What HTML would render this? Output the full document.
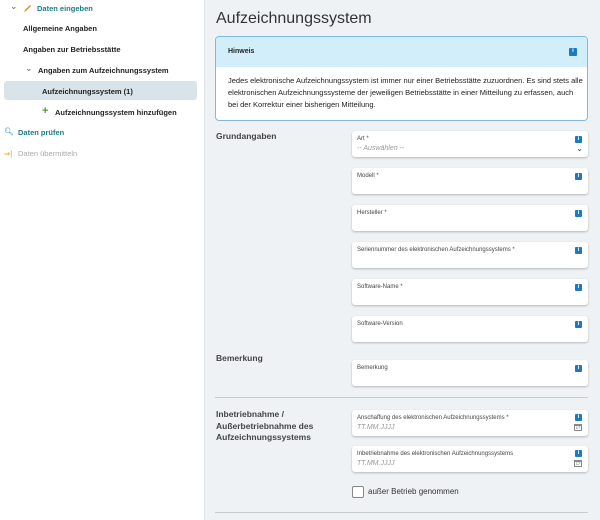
<!DOCTYPE html>
<html><head><meta charset="utf-8"><style>
*{box-sizing:border-box;margin:0;padding:0}
body{width:600px;height:520px;overflow:hidden;font-family:"Liberation Sans","DejaVu Sans",sans-serif;background:#eff2f5;position:relative;color:#222}
.side{position:absolute;left:0;top:0;width:205px;height:520px;background:#fff}
.a{position:absolute;font-size:7.5px;white-space:nowrap}
.b{font-weight:bold}
.sec{font-size:8.5px;color:#444;font-weight:bold}
.inp{position:absolute;left:352px;width:236px;height:26px;background:#fff;border-radius:3px;box-shadow:0 1px 2px rgba(0,0,0,.25)}
.inp .l{position:absolute;left:5px;top:5px;font-size:6px;color:#444;white-space:nowrap}
.inp .p{position:absolute;left:5px;top:14px;font-size:7px;color:#999;font-style:italic}
.ic{position:absolute;right:6px;top:5px;width:7px;height:7px;background:#1a7bc4;border-radius:1px;color:#fff;font-size:6px;font-weight:bold;text-align:center;line-height:7px}
.cal{position:absolute;right:6px;top:14px;width:8px;height:7px;border:1px solid #888;border-top:2px solid #888;font-size:4px;line-height:4px;text-align:center;color:#555}
.hr{position:absolute;left:215px;width:373px;height:1px;background:#c8ccd0}
</style></head><body>
<div class="side">
  <div class="a" style="left:10px;top:1px;color:#666;font-size:9px">⌄</div>
  <svg style="position:absolute;left:23px;top:4px" width="9" height="9" viewBox="0 0 9 9"><path d="M1 8 L2 6 L7 1 L8 2 L3 7 Z" fill="#e08a1e"/></svg>
  <div class="a b" style="left:37px;top:4px;color:#1a7c86">Daten eingeben</div>
  <div class="a b" style="left:23px;top:24px">Allgemeine Angaben</div>
  <div class="a b" style="left:23px;top:45px">Angaben zur Betriebsstätte</div>
  <div class="a" style="left:25px;top:63px;color:#666;font-size:9px">⌄</div>
  <div class="a b" style="left:38px;top:66px">Angaben zum Aufzeichnungssystem</div>
  <div style="position:absolute;left:4px;top:81px;width:193px;height:19px;background:#d9e3ea;border-radius:3px"></div>
  <div class="a b" style="left:42px;top:87px">Aufzeichnungssystem (1)</div>
  <div class="a b" style="left:42px;top:105px;color:#4aa02c;font-size:11px">+</div>
  <div class="a b" style="left:55px;top:108px">Aufzeichnungssystem hinzufügen</div>
  <div class="a" style="left:4px;top:127px;color:#1a7bc4">🔍︎</div>
  <div class="a b" style="left:18px;top:128px;color:#1a7c86">Daten prüfen</div>
  <div class="a" style="left:4px;top:149px;color:#d9a030">⇒|</div>
  <div class="a" style="left:18px;top:149px;color:#aaa">Daten übermitteln</div>
</div>
<div style="position:absolute;left:204px;top:0;width:1px;height:520px;background:#e0e3e6"></div>
<div class="a" style="left:216px;top:10px;font-size:16px;color:#333">Aufzeichnungssystem</div>
<div style="position:absolute;left:215px;top:36px;width:373px;height:85px;background:#fff;border:1px solid #7fb9e0;border-radius:4px;overflow:hidden">
  <div style="height:30px;background:#d3eefb;position:relative">
    <div class="a b" style="left:12px;top:11px;font-size:7px">Hinweis</div>
    <div class="ic" style="right:10px;top:11px;width:8px;height:8px">i</div>
  </div>
  <div style="position:absolute;left:12px;top:38px;font-size:7.5px;line-height:12px;color:#222;width:355px">Jedes elektronische Aufzeichnungssystem ist immer nur einer Betriebsstätte zuzuordnen. Es sind stets alle elektronischen Aufzeichnungssysteme der jeweiligen Betriebsstätte in einer Mitteilung zu erfassen, auch bei der Korrektur einer bisherigen Mitteilung.</div>
</div>
<div class="a sec" style="left:216px;top:131px">Grundangaben</div>
<div class="inp" style="top:131px"><div class="l">Art *</div><div class="p">-- Auswählen --</div><div class="ic">i</div><div style="position:absolute;right:5px;top:13px;font-size:8px;color:#333">⌄</div></div>
<div class="inp" style="top:168px"><div class="l">Modell *</div><div class="ic">i</div></div>
<div class="inp" style="top:205px"><div class="l">Hersteller *</div><div class="ic">i</div></div>
<div class="inp" style="top:242px"><div class="l">Seriennummer des elektronischen Aufzeichnungssystems *</div><div class="ic">i</div></div>
<div class="inp" style="top:279px"><div class="l">Software-Name *</div><div class="ic">i</div></div>
<div class="inp" style="top:316px"><div class="l">Software-Version</div><div class="ic">i</div></div>
<div class="a sec" style="left:216px;top:353px">Bemerkung</div>
<div class="inp" style="top:360px"><div class="l">Bemerkung</div><div class="ic">i</div></div>
<div class="hr" style="top:397px"></div>
<div class="a sec" style="left:216px;top:409px;line-height:11.5px">Inbetriebnahme /<br>Außerbetriebnahme des<br>Aufzeichnungssystems</div>
<div class="inp" style="top:410px"><div class="l">Anschaffung des elektronischen Aufzeichnungssystems *</div><div class="p">TT.MM.JJJJ</div><div class="ic" style="top:4px">i</div><div class="cal">17</div></div>
<div class="inp" style="top:446px"><div class="l">Inbetriebnahme des elektronischen Aufzeichnungssystems</div><div class="p">TT.MM.JJJJ</div><div class="ic" style="top:4px">i</div><div class="cal">17</div></div>
<div style="position:absolute;left:352px;top:486px;width:12px;height:12px;background:#fff;border:1px solid #888;border-radius:2px"></div>
<div class="a" style="left:368px;top:487px;color:#333;font-size:8px">außer Betrieb genommen</div>
<div class="hr" style="top:512px"></div>
</body></html>
